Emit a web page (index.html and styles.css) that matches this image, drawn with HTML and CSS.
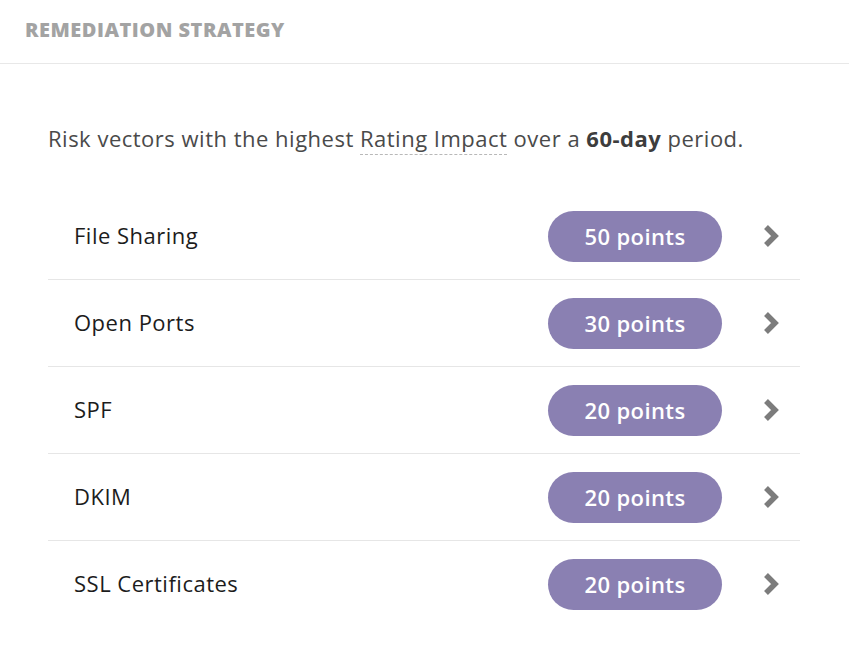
FILE: index.html
```html
<!DOCTYPE html>
<html>
<head>
<meta charset="utf-8">
<link rel="stylesheet" href="styles.css">
</head>
<body>
<div class="panel">
  <div class="panel-header">REMEDIATION STRATEGY</div>
  <div class="panel-body">
    <p class="intro">Risk vectors with the highest <span class="term">Rating Impact</span> over a <b>60-day</b> period.</p>
    <ul class="vectors">
      <li class="vector"><span class="name">File Sharing</span><span class="pill">50 points</span><svg class="chev" viewBox="0 0 18 24"><polyline points="4,3 13,12 4,21"/></svg></li>
      <li class="vector"><span class="name">Open Ports</span><span class="pill">30 points</span><svg class="chev" viewBox="0 0 18 24"><polyline points="4,3 13,12 4,21"/></svg></li>
      <li class="vector"><span class="name">SPF</span><span class="pill">20 points</span><svg class="chev" viewBox="0 0 18 24"><polyline points="4,3 13,12 4,21"/></svg></li>
      <li class="vector"><span class="name">DKIM</span><span class="pill">20 points</span><svg class="chev" viewBox="0 0 18 24"><polyline points="4,3 13,12 4,21"/></svg></li>
      <li class="vector"><span class="name">SSL Certificates</span><span class="pill">20 points</span><svg class="chev" viewBox="0 0 18 24"><polyline points="4,3 13,12 4,21"/></svg></li>
    </ul>
  </div>
</div>
</body>
</html>
```

FILE: styles.css
```css
html, body {
  margin: 0;
  padding: 0;
  background: #ffffff;
}
body {
  font-family: "Open Sans", "Liberation Sans", sans-serif;
}
.panel {
  width: 849px;
}
.panel-header {
  height: 64px;
  box-sizing: border-box;
  padding: 16px 0 0 25px;
  font-size: 20px;
  line-height: 27px;
  font-weight: 800;
  color: #a3a3a3;
  letter-spacing: 0.5px;
  border-bottom: 1px solid #e8e8e8;
}
.panel-body {
  padding: 0 49px 0 48px;
}
.intro {
  margin: 60px 0 41px 0;
  font-size: 22px;
  line-height: 28px;
  letter-spacing: 0.5px;
  color: #4a4a4a;
  white-space: nowrap;
}
.intro b {
  font-weight: 700;
  color: #3d3d3d;
}
.term {
  border-bottom: 1px dashed #b8b8b8;
  padding-bottom: 1px;
}
.vectors {
  list-style: none;
  margin: 0;
  padding: 0;
}
.vector {
  display: flex;
  align-items: center;
  height: 86px;
  padding-left: 26px;
  border-bottom: 1px solid #e6e6e6;
}
.vector:last-child {
  border-bottom: none;
}
.name {
  flex: 1;
  font-size: 22px;
  letter-spacing: 0.5px;
  color: #1c1c1c;
  padding-bottom: 2px;
}
.pill {
  width: 174px;
  height: 51px;
  border-radius: 26px;
  background: #8a80b2;
  color: #ffffff;
  font-size: 22px;
  font-weight: 600;
  letter-spacing: 0.4px;
  display: flex;
  align-items: center;
  justify-content: center;
}
.chev {
  width: 18px;
  height: 24px;
  margin: 0 20px 0 40px;
  fill: none;
  stroke: #7c7c7c;
  stroke-width: 5.5;
  stroke-linecap: butt;
  stroke-linejoin: miter;
}
```
